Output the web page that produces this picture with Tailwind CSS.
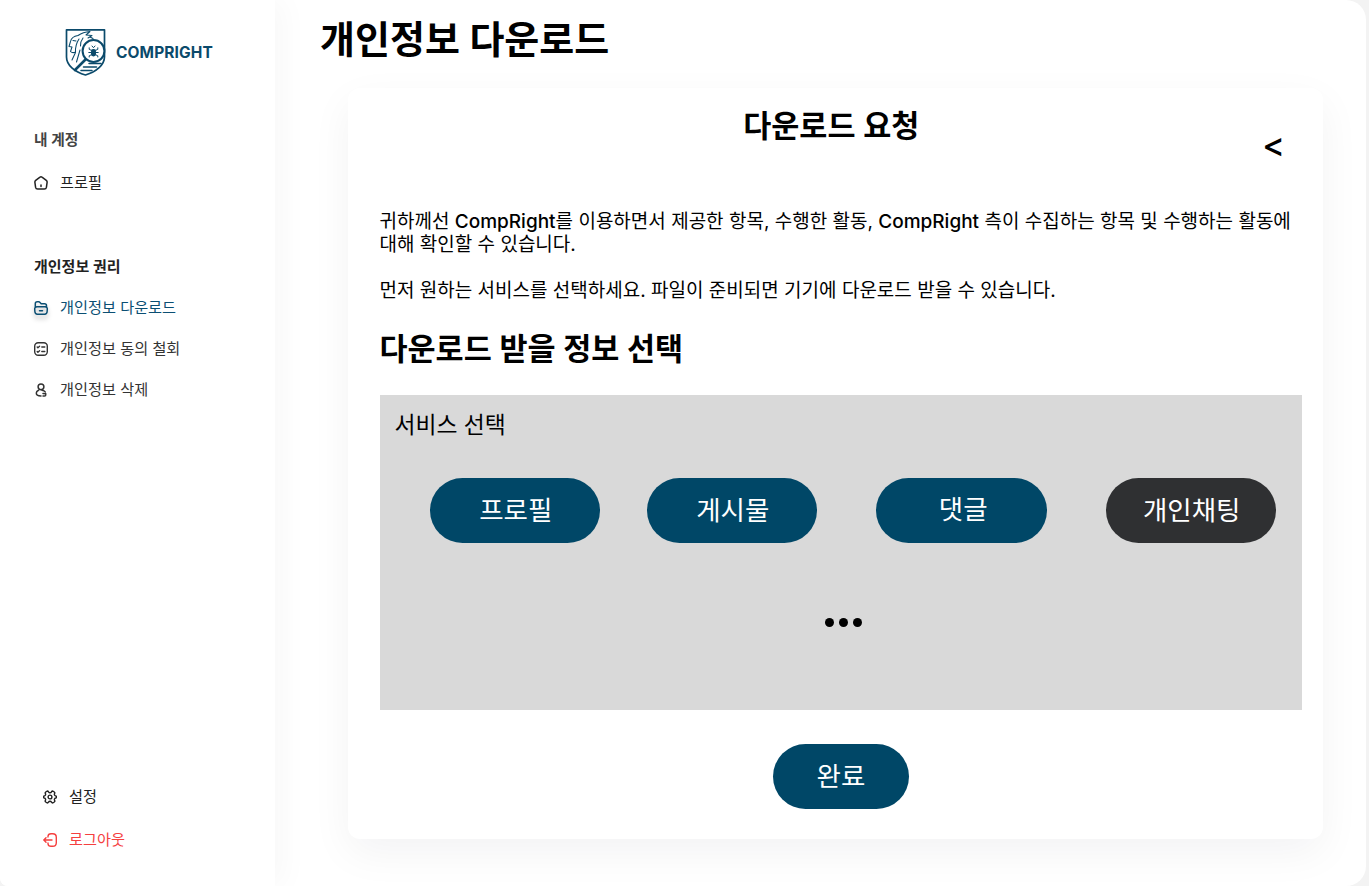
<!DOCTYPE html>
<html lang="ko">
<head>
<meta charset="utf-8">
<title>CompRight</title>
<script src="https://cdn.jsdelivr.net/npm/@tailwindcss/browser@4"></script>
</head>
<body class="h-[886px] w-[1369px] overflow-hidden bg-[#f3f3f3] font-['Inter','Noto_Sans_CJK_KR',sans-serif] text-black">
<div class="flex h-[886px] w-[1366px] overflow-hidden rounded-tr-[20px] rounded-br-[20px] rounded-bl-[8px] bg-white whitespace-nowrap">
  <aside class="z-10 flex w-[275px] shrink-0 flex-col bg-white shadow-[8px_0_28px_rgba(0,0,0,0.03)]">
    <div class="ml-[65px] mt-7 flex h-12 items-center gap-[10px] text-[#0b4a6b]">
      <svg class="h-12 w-[41px]" viewBox="0 0 41 48" fill="none" stroke="currentColor" stroke-linecap="round" stroke-linejoin="round">
        <path d="M1.500 1.800h38v27c0 8-8 15-19 18.200C9.500 44 1.500 37 1.500 29z" stroke-width="1.700"/>
        <path d="M5.500 13.500q1-5 7.500-6M13 7.500q5-3.500 12-4l-4 3.500 6 .5-4 2.500M5.500 13.500l-1.500 5 3 .5-1.500 4.500q2 2 5 .5M8 12.500l3 .5M14 11q-4 6-3.500 13.500M18 10q-3 4-2.500 8M10.500 24.500L7 32M15 22l-3.500 12M25 9l3 1.500" stroke-width="1.050"/>
        <circle cx="28.500" cy="23" r="10.900" fill="white" stroke-width="2"/>
        <path d="M20.500 31.500L10 42" stroke-width="2.600"/>
        <path d="M24 35.500h12M18.500 39h13M16 42.500h11" stroke-width="1.500"/>
        <rect x="26" y="21" width="5" height="7.500" rx="2.400" fill="currentColor" stroke="none"/>
        <path d="M27 18l1.500 1.700L30 18M24.200 19.800v1.500l2 1h4.600l2-1v-1.500M23.800 24.500h9.400M24.200 29v-1.200l2-1h4.600l2 1V29" stroke-width="1"/>
      </svg>
      <span class="mt-[2px] text-[15.500px] leading-5 font-bold tracking-[0.100px]">COMPRIGHT</span>
    </div>
    <h2 class="ml-[34px] mt-[54px] h-5 text-[14.700px] leading-5 font-semibold text-[#444]">내 계정</h2>
    <a class="ml-[34px] mt-[23px] flex h-5 items-center gap-3 text-[15.200px] leading-5 text-[#222]">
      <svg class="size-[14px]" viewBox="0 0 14 14" fill="none" stroke="currentColor" stroke-width="1.500" stroke-linecap="round" stroke-linejoin="round"><path d="M6 1.200Q7 .4 8 1.200l4.300 3.200q1 .8.8 2l-.7 5q-.3 1.700-2 1.700H3.600q-1.700 0-2-1.700l-.7-5q-.2-1.200.8-2zM7 9v1.600"/></svg>
      <span>프로필</span>
    </a>
    <h2 class="ml-[34px] mt-16 h-5 text-[15px] leading-5 font-semibold text-[#222]">개인정보 권리</h2>
    <nav class="ml-[34px] mt-[21px] flex flex-col gap-[21px] text-[15.200px] leading-5 text-[#333]">
      <a class="flex h-5 items-center gap-3 text-[#0b4f73]">
        <svg class="size-[14px] overflow-visible drop-shadow-[0_4px_2px_rgba(0,0,0,0.25)]" viewBox="0 0 14 14" fill="none" stroke="currentColor" stroke-width="1.500" stroke-linecap="round" stroke-linejoin="round"><path d="M1.300 6V2.800Q1.300.8 3.200.8h1.500q.8 0 1.300.6l.8 1q.4.4 1 .4h2.700q2 0 2 2V6M3 5.800h8q2.500 0 2.300 2.500l-.2 2.500q-.2 2.400-2.400 2.400H3.300q-2.200 0-2.400-2.400L.7 8.300Q.5 5.800 3 5.800zM5.500 9.800h3"/></svg>
        <span>개인정보 다운로드</span>
      </a>
      <a class="flex h-5 items-center gap-3">
        <svg class="size-[14px]" viewBox="0 0 14 14" fill="none" stroke="currentColor" stroke-width="1.400" stroke-linecap="round" stroke-linejoin="round"><rect x=".7" y=".7" width="12.600" height="12.600" rx="3.500"/><path d="M7.800 5h3M7.800 9.500h3M3.200 5l.7.7 1.700-1.500M3.200 9.500l.7.700 1.700-1.500"/></svg>
        <span>개인정보 동의 철회</span>
      </a>
      <a class="flex h-5 items-center gap-3">
        <svg class="size-[14px]" viewBox="0 0 14 14" fill="none" stroke="currentColor" stroke-width="1.500" stroke-linecap="round" stroke-linejoin="round"><circle cx="7" cy="3.800" r="2.900"/><path d="M4.500 7.200Q2.300 8.200 2.300 10q0 3 4.700 3M8 7.200q2.500.2 3.300 1.800M9 10.500l2.800.2M9 13h1.500q1.300 0 1.300-1.300"/></svg>
        <span>개인정보 삭제</span>
      </a>
    </nav>
    <nav class="mt-auto mb-9 ml-[43px] flex flex-col gap-[23px] text-[15.200px] leading-5">
      <a class="flex h-5 items-center gap-3 text-[#222]">
        <svg class="size-[14px]" viewBox="0 0 14 14" fill="none" stroke="currentColor" stroke-width="1.400" stroke-linecap="round" stroke-linejoin="round"><circle cx="7" cy="7" r="1.900"/><path d="M4.200 1.100c.6-.2 1 .2 1.300.7.700 1.200 2.300 1.200 3 0 .3-.5.700-.9 1.300-.7l1.500.9c.6.400.6 1 .3 1.600-.6 1.200.2 2.400 1.300 2.400.4 0 .5.500.5 1s-.1 1-.5 1c-1.100 0-1.900 1.200-1.300 2.400.3.600.3 1.200-.3 1.600l-1.500.9c-.6.200-1-.2-1.300-.7-.7-1.200-2.300-1.200-3 0-.3.500-.7.900-1.300.7L2.700 12c-.6-.4-.6-1-.3-1.600C3 9.200 2.200 8 1.100 8 .7 8 .6 7.500.6 7s.1-1 .5-1c1.100 0 1.900-1.200 1.300-2.400-.3-.6-.3-1.200.3-1.600z"/></svg>
        <span>설정</span>
      </a>
      <a class="flex h-5 items-center gap-3 text-[#f5403f]">
        <svg class="size-[14px]" viewBox="0 0 14 14" fill="none" stroke="currentColor" stroke-width="1.400" stroke-linecap="round" stroke-linejoin="round"><path d="M5 4V3.300Q5.200.7 8 .7h1.700q3.600 0 3.600 3.600v5.400q0 3.600-3.600 3.600H8q-2.800 0-3-2.600V10M9 7H1M3 4.800L.8 7 3 9.200"/></svg>
        <span>로그아웃</span>
      </a>
    </nav>
  </aside>
  <main class="flex flex-1 flex-col">
    <h1 class="ml-[45px] mt-[15px] h-12 text-[38px] leading-[48px] font-semibold">개인정보 다운로드</h1>
    <section class="ml-[73px] mt-[25px] flex h-[751px] w-[975px] flex-col rounded-xl bg-white pr-[21px] pl-[31.500px] shadow-[0_14px_42px_rgba(20,20,43,0.05)]">
      <header class="grid grid-cols-[1fr_auto_1fr] pr-[20px]">
        <h2 class="col-start-2 mt-[18px] ml-px h-10 text-[30.500px] leading-10 font-semibold">다운로드 요청</h2>
        <button class="mt-[37px] -mr-[3px] h-10 justify-self-end text-[34px] leading-10 font-medium">&lt;</button>
      </header>
      <div class="mt-[45px] text-[19px] leading-[23px]">
        <p>귀하께선 <span class="font-medium">CompRight</span>를 이용하면서 제공한 항목, 수행한 활동, <span class="font-medium">CompRight</span> 측이 수집하는 항목 및 수행하는 활동에<br>대해 확인할 수 있습니다.</p>
        <p class="mt-[23px]">먼저 원하는 서비스를 선택하세요. 파일이 준비되면 기기에 다운로드 받을 수 있습니다.</p>
      </div>
      <h2 class="mt-[27px] h-10 text-[30.500px] leading-10 font-semibold">다운로드 받을 정보 선택</h2>
      <div class="mt-[26px] flex h-[315px] w-[922.500px] shrink-0 flex-col bg-[#d9d9d9]">
        <h3 class="mt-4 ml-[15px] h-7 text-[22.800px] leading-7">서비스 선택</h3>
        <div class="mt-[39px] ml-[50px] flex text-[26.500px] leading-[65px] text-white">
          <button class="h-[65px] w-[170.500px] rounded-full bg-[#004767] pl-[2px]">프로필</button>
          <button class="ml-[46.500px] h-[65px] w-[170.500px] rounded-full bg-[#004767] pl-[2px]">게시물</button>
          <button class="ml-[59px] h-[65px] w-[170.500px] rounded-full bg-[#004767] pb-[2px] pl-1 leading-[63px]">댓글</button>
          <button class="ml-[59px] h-[65px] w-[170.500px] rounded-full bg-[#2f3032] pl-[2px]">개인채팅</button>
        </div>
        <div class="mt-[75px] ml-[445.500px] flex gap-[5px]">
          <i class="size-[9px] rounded-full bg-black"></i><i class="size-[9px] rounded-full bg-black"></i><i class="size-[9px] rounded-full bg-black"></i>
        </div>
      </div>
      <button class="mt-[34px] ml-[393.500px] h-[65px] w-[136px] rounded-full bg-[#004767] text-[26.500px] leading-[65px] text-white">완료</button>
    </section>
  </main>
</div>
</body>
</html>
